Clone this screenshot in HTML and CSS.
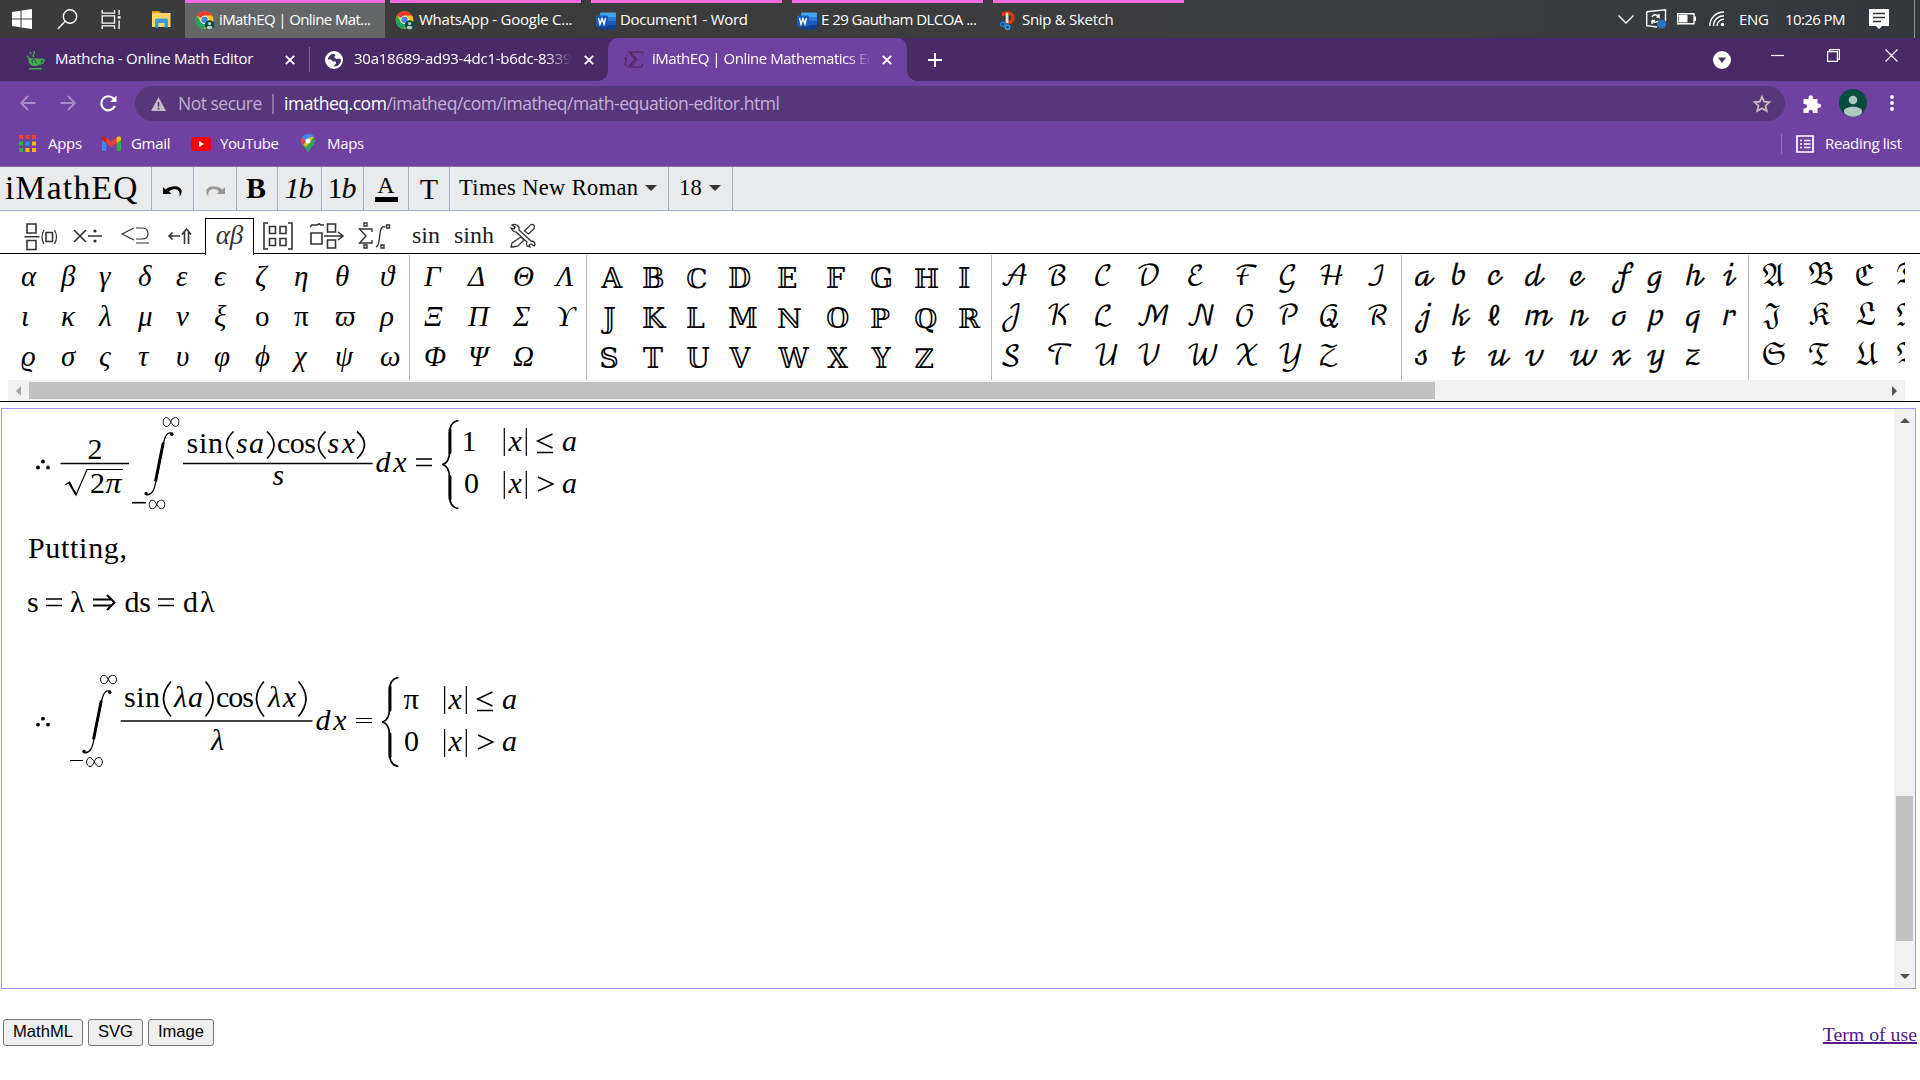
FILE: index.html
```html
<!DOCTYPE html>
<html lang="en">
<head>
<meta charset="utf-8">
<title>iMathEQ | Online Mathematics Editor</title>
<link rel="stylesheet" href="styles.css">
</head>
<body>
<svg class="defs" width="0" height="0">
  <defs>
    <symbol id="chrome" viewBox="0 0 20 20">
      <circle cx="9.5" cy="9.5" r="9.3" fill="#fbc116"/>
      <path d="M9.5 9.500L1.450 4.850A9.300 9.300 0 0 1 17.600 4.850H9.500z" fill="#e33b2e"/>
      <path d="M1.450 4.850A9.300 9.300 0 0 0 8.800 18.800L13 12 9.500 9.500 5.500 11.500z" fill="#1da462"/>
      <circle cx="9.500" cy="9.300" r="4.400" fill="#fff"/><circle cx="9.500" cy="9.300" r="3.400" fill="#4285f4"/>
      <circle cx="14.800" cy="14.800" r="5" fill="#064e40"/><circle cx="14.800" cy="13.200" r="1.700" fill="#b5cbc6"/><path d="M11.600 18c.6-3.200 5.800-3.200 6.400 0-1.800 2-4.600 2-6.400 0z" fill="#b5cbc6"/>
    </symbol>
    <symbol id="word" viewBox="0 0 20 18">
      <path d="M5 1h14a1 1 0 0 1 1 1v4H4V2a1 1 0 0 1 1-1z" fill="#41a5ee"/><path d="M4 5.500h16v4H4z" fill="#2b7cd3"/><path d="M4 9.500h16v4H4z" fill="#185abd"/><path d="M4 13.500h16V17a1 1 0 0 1-1 1H5a1 1 0 0 1-1-1z" fill="#103f91"/>
      <rect y="4" width="12" height="11" rx="1" fill="#185abd"/><path d="M2.500 6.500l1.500 6 2-5.500 2 5.500 1.500-6" fill="none" stroke="#fff" stroke-width="1.400"/>
    </symbol>
    <symbol id="x" viewBox="0 0 10 10"><path d="M.8.8l8.400 8.400M9.200.8L.8 9.200" stroke="#fff" stroke-width="1.900"/></symbol>
    <symbol id="inf" viewBox="0 0 17 10"><path d="M10 1.500C8 4 7.500 9.400 4 9.400C2 9.400.600 7.400.600 5S2 .6 4 .6C7.500.6 9 9.400 13 9.400c2 0 3.400-2 3.400-4.400S15 .6 13 .6C11.500.6 10.500 1 9.500 2.500" fill="none" stroke="#000" stroke-width="1"/></symbol>
    <symbol id="integral" viewBox="0 0 31 66"><path d="M29.500 2.500C25 .5 22 3 20 12L12.500 50C11 59 8 65 2.500 63.500" fill="none" stroke="#000" stroke-width="1.300"/><path d="M20.600 12L13 50 11.300 49.500 18.800 12z" stroke="#000" stroke-width="1.200"/><circle cx="28.300" cy="3.300" r="1.700"/><circle cx="2.600" cy="62.500" r="1.700"/></symbol>
    <symbol id="brace" viewBox="0 0 17 90"><path d="M16.500.5C9 1.500 7.500 7 7.500 14v18C7.500 39 5 43.500.5 45 5 46.500 7.500 51 7.500 58v18C7.500 83 9 88.500 16.500 89.500" fill="none" stroke="#000" stroke-width="1.700"/><path d="M8 10v23M8 57v23" stroke="#000" stroke-width="2.900" stroke-linecap="round"/></symbol>
  </defs>
</svg>

<header class="taskbar">
  <div class="launch">
    <svg class="win" viewBox="0 0 20 20"><path d="M0 3l8.500-1.200V9.500H0zM9.500 1.600L20 0v9.500H9.500zM0 10.500h8.500v7.700L0 17zM9.500 10.500H20V20L9.500 18.400z" fill="#fff"/></svg>
    <svg class="find" viewBox="0 0 21 21"><circle cx="13" cy="7.500" r="6.700"/><path d="M8.200 12.300L.8 20"/></svg>
    <svg class="views" viewBox="0 0 21 20"><path d="M.7 0v3.300h13V0M.7 20v-3.300h13V20M.7 6.200h13v7.600H.7zM18.500 0v5M18.500 11v9"/><path d="M17 6.500h3V9h-3z" fill="#fff" stroke="none"/></svg>
    <svg class="folder" viewBox="0 0 19 17"><path d="M0 0h7l2 2H0z" fill="#e8a300"/><path d="M0 2h18.500v14H0z" fill="#ffd66b"/><path d="M3 16V9q0-1.500 1.500-1.500h10Q16 7.500 16 9v7.500h-3.500V12h-6v4.500H3z" fill="#3a9be0"/></svg>
  </div>
  <nav class="tasks">
    <div class="task current"><svg><use href="#chrome"/></svg><span class="k1">iMathEQ | Online Mat...</span></div>
    <div class="task t2"><svg><use href="#chrome"/></svg><span class="k2">WhatsApp - Google C...</span></div>
    <div class="task"><svg><use href="#word"/></svg><span class="k3">Document1 - Word</span></div>
    <div class="task"><svg><use href="#word"/></svg><span class="k4">E 29 Gautham DLCOA ...</span></div>
    <div class="task"><svg viewBox="0 0 20 20"><path d="M3 2C10-2 17 1 17 7c0 4-3 7-7 6.500V10c3 0 4.500-2.500 3-4.500C11 3 7 4 4 6z" fill="#d83b11"/><path d="M7.500 3L9 1l1.500 2v10h-3z" fill="#ddd"/><circle cx="4.500" cy="14" r="2.200" fill="none" stroke="#1683d8" stroke-width="1.600"/><circle cx="9.500" cy="17" r="2.200" fill="none" stroke="#29a0e8" stroke-width="1.600"/></svg><span class="k5">Snip &amp; Sketch</span></div>
  </nav>
  <div class="tray">
    <svg class="t-chev" viewBox="0 0 16 9"><path d="M.5.5L8 8 15.500.5"/></svg>
    <svg class="t-sync" viewBox="0 0 21 20"><path d="M.7 2.700L19.500.7V12M.7 2.700v14L11 18"/><path d="M6 8c1-3 5-3 7 0V5M13.500 8h-3M12 12c-2 2-5 1.500-6-.5v3.500M6 11.500h3"/><circle cx="15.500" cy="15" r="4.600" fill="#2b74c4" class="dot"/></svg>
    <svg class="t-bat" viewBox="0 0 19 12"><path d="M.7.7h16.300v10H.7zM18.300 3.500v4.500"/><path d="M2 2h8.500v7.400H2z" fill="#fff" stroke="none"/></svg>
    <svg class="t-wifi" viewBox="0 0 16 16"><path d="M.8 15C.8 7 7 1 15 1M4.500 15C4.500 9 9 4.700 15 4.700M8 15c0-4 3-6.700 7-6.700"/><circle cx="13.500" cy="13.500" r="1.700" fill="#fff" stroke="none"/></svg>
    <span class="lang">ENG</span><span class="clock">10:26 PM</span>
    <svg class="t-note" viewBox="0 0 20 20"><path d="M0 0h20v17h-7l-3 3-3-3H0z" fill="#fff" stroke="none"/><path d="M4 4.500h12M4 8.500h12M4 12.500h8" stroke="#333"/></svg>
    <i class="peek"></i>
  </div>
</header>

<div class="tabstrip">
  <div class="tab a">
    <svg class="fav" viewBox="0 0 20 20"><path d="M2.500 8.500h13c0 5-2 7.500-6.500 7.500s-6.500-2.500-6.500-7.500z" fill="#3fae49"/><path d="M15 9.500h3c0 3-1.500 4.500-4 4.500M3 18.700h12.500M4 9L1 6M8 7c-3-2 2-3 0-6M5 4L4 2" fill="none" stroke="#3fae49" stroke-width="1.400"/><path d="M7 13c-2-1-1-4 1-3 2 0 1 4 3 3" stroke="#463068" fill="none"/></svg>
    <span class="label m">Mathcha - Online Math Editor</span><svg class="close"><use href="#x"/></svg>
  </div>
  <i class="split"></i>
  <div class="tab b">
    <svg class="fav g" viewBox="0 0 18 18"><circle cx="9" cy="9" r="9" fill="#fff"/><path d="M8.500 2.500c-3.500 1-5.500 3.500-5.800 6H6l2 2h3v2l-2.500 3c5 .5 7.500-3.500 7.500-7l-2-1-3 .5-2-2 1.500-1.500z" fill="#463068"/></svg>
    <span class="label n fade">30a18689-ad93-4dc1-b6dc-8339c</span><svg class="close"><use href="#x"/></svg>
  </div>
  <div class="tab active">
    <svg class="fav s" viewBox="0 0 20 18"><path d="M19.500 3.500V1H6l6 7.500L5.500 16h13l1-3.500M8 1.500l6 7L7 16M1 8l2.500-1L2 13.500q0 1.500 2 .5M4 3.500v1.500" fill="none" stroke="#5d2c70" stroke-width="1.500"/></svg>
    <span class="label o fade">iMathEQ | Online Mathematics Edi</span><svg class="close"><use href="#x"/></svg>
  </div>
  <svg class="plus" viewBox="0 0 14 14"><path d="M7 0v14M0 7h14" stroke="#fff" stroke-width="2"/></svg>
  <div class="winctl">
    <svg class="w1" viewBox="0 0 18 18"><circle cx="9" cy="9" r="9" fill="#fff"/><path d="M5 6.500h8L9 12z" fill="#463068"/></svg>
    <svg class="w2" viewBox="0 0 13 13"><path d="M0 6.500h13"/></svg>
    <svg class="w3" viewBox="0 0 13 13"><path d="M.6 2.600h9.800v9.800H.6zM2.600 2.600v-2h9.800v9.800h-2"/></svg>
    <svg class="w4" viewBox="0 0 13 13"><path d="M.5.5l12 12M12.500.5l-12 12"/></svg>
  </div>
</div>

<div class="navbar">
  <svg class="n-back" viewBox="0 0 16 16"><path d="M15.500 8H1.500M8 1L1 8l7 7"/></svg>
  <svg class="n-fwd" viewBox="0 0 16 16"><path d="M.5 8h14M8 1l7 7-7 7"/></svg>
  <svg class="n-load" viewBox="0 0 17 17"><path d="M14.800 11A7 7 0 1 1 13.500 3.500L15 5"/><path d="M16.500.5v6.500H10z" fill="#fff" stroke="none"/></svg>
  <div class="omnibox">
    <svg class="warn" viewBox="0 0 15 14"><path d="M7.500 0L15 14H0z" fill="#c3bcca"/><path d="M7.500 5v4.500M7.500 10.700v1.800" stroke="#55377b" stroke-width="1.600"/></svg>
    <span class="insecure">Not secure</span><i class="bar"></i>
    <span class="url"><b>imatheq.com</b>/imatheq/com/imatheq/math-equation-editor.html</span>
    <svg class="star" viewBox="0 0 18 18"><path d="M9 1.800l2.200 4.900 5.300.5-4 3.500 1.200 5.300L9 13.200 4.300 16l1.200-5.300-4-3.500 5.300-.5z" fill="none" stroke="#c9c1c3" stroke-width="1.700"/></svg>
  </div>
  <svg class="puzzle" viewBox="0 0 18 18"><path d="M1 4h4c-.6-5 5-5 4.500 0H14v4.500c5-.5 5 5 0 4.500V18H9.500c.4-4.500-5-4.500-4.500 0H0v-4.500c4.800.5 4.800-5 0-4.500V4z" fill="#fff"/></svg>
  <svg class="avatar" viewBox="0 0 28 28"><circle cx="14" cy="14" r="14" fill="#054d40"/><circle cx="14" cy="11" r="4.300" fill="#b0c8c3"/><path d="M5 21.500c2-5 16-5 18 0v2.500c-5 5-13 5-18 0z" fill="#b0c8c3"/></svg>
  <svg class="more" viewBox="0 0 4 16"><g fill="#fff"><circle cx="2" cy="2" r="1.900"/><circle cx="2" cy="8" r="1.900"/><circle cx="2" cy="14" r="1.900"/></g></svg>
</div>

<div class="bookmarks">
  <svg class="apps" viewBox="0 0 17 17"><g fill="#ea4335"><path d="M0 0h4v4H0zM6.500 0h4v4h-4zM13 0h4v4h-4z"/></g><path d="M0 6.500h4v4H0zM0 13h4v4H0z" fill="#34a853"/><path d="M6.500 6.500h4v4h-4z" fill="#2196f3"/><path d="M13 6.500h4v4h-4zM6.500 13h4v4h-4zM13 13h4v4h-4z" fill="#fbbc05"/></svg>
  <span class="b1">Apps</span>
  <svg class="gmail" viewBox="0 0 19 15"><path d="M0 3h4.300v12H1.500Q0 15 0 13.500z" fill="#4285f4"/><path d="M14.700 3H19v10.500q0 1.500-1.500 1.500h-2.800z" fill="#34a853"/><path d="M4.300 1.500l5.200 4 5.200-4V7L9.500 11 4.300 7z" fill="#ea4335"/><path d="M0 2.500C0 0 3-.5 4.300 1.500V7L0 4z" fill="#c5221f"/><path d="M19 2.500c0-2.500-3-3-4.300-1V7L19 4z" fill="#fbbc04"/></svg>
  <span class="b2">Gmail</span>
  <svg class="yt" viewBox="0 0 20 14"><rect width="20" height="14" rx="3" fill="#f00"/><path d="M8 4l5 3-5 3z" fill="#fff"/></svg>
  <span class="b3">YouTube</span>
  <svg class="pin" viewBox="0 0 14 19"><path d="M7 19C6 14 0 12 0 7a7 7 0 0 1 14 0c0 5-6 7-7 12z" fill="#34a853"/><path d="M1 4A7 7 0 0 1 13 3L4 12Q0 9 0 7z" fill="#4285f4"/><path d="M0 7q0-2 1-3.500L4.500 7 2.500 10.500Q0 9 0 7z" fill="#ea4335"/><path d="M2.500 10.500L9 3l4-.5L5 13z" fill="#fbbc04"/><path d="M9 2l4 1A7 7 0 0 0 6 0z" fill="#4285f4"/><circle cx="7" cy="7" r="2.500" fill="#fff"/></svg>
  <span class="b4">Maps</span>
  <div class="reading"><svg viewBox="0 0 18 18"><path d="M1 1h16v16H1zM4 5.500h2M8 5.500h6.500M4 9h2M8 9h6.500M4 12.500h2M8 12.500h6.500" fill="none" stroke="#fff" stroke-width="1.700"/></svg><span>Reading list</span></div>
</div>

<div class="tools">
  <div class="brand">iMathEQ</div>
  <div class="c1"><svg width="20" height="12" viewBox="0 0 20 12"><path d="M0 2l2.500 2.500C8 0 17 0 18.500 5c.5 2.500-.5 5-2 6.500 1-4.500-1.500-7.500-5-7.500-2 0-4 1-5.500 2.500L8.500 9H0z"/></svg></div>
  <div class="c2"><svg width="20" height="12" viewBox="0 0 20 12"><path d="M20 2l-2.500 2.500C12 0 3 0 1.500 5c-.5 2.500.5 5 2 6.500C2.500 7 5 4 8.500 4c2 0 4 1 5.500 2.500L11.500 9H20z" fill="#999"/></svg></div>
  <div class="c3 bold">B</div>
  <div class="c4"><em>1b</em></div>
  <div class="c5">1<em>b</em></div>
  <div class="c6"><span class="inkA">A</span></div>
  <div class="c7">T</div>
  <div class="c8 pick">Times New Roman<i class="tri"></i></div>
  <div class="c9 pick">18<i class="tri"></i></div>
</div>

<div class="cats">
  <svg class="i1" width="34" height="30" viewBox="0 0 34 30"><path d="M3 3h9v9H3zM3 19.500h9v9H3zM.5 15.700h15M22 11.500h6.500v9H22z"/><path d="M20 9q-4 7 0 14M30.500 9q4 7 0 14" stroke-width="1.200"/></svg>
  <svg class="i2" width="30" height="14" viewBox="0 0 30 14"><path d="M1 1l12 12M13 1L1 13M15 7h14"/><circle cx="22" cy="2" r="1.600" fill="#333" stroke="none"/><circle cx="22" cy="12" r="1.600" fill="#333" stroke="none"/></svg>
  <svg class="i3" width="29" height="18" viewBox="0 0 29 18"><path d="M13 1L1 7l12 6M15 1h6q6 0 6 5.500T21 12h-6M15 16h13" stroke-width="1.200"/></svg>
  <svg class="i4" width="24" height="16" viewBox="0 0 24 16"><path d="M12 8H1M4.500 4.500L1 8l3.500 3.500M16.500 16V4M20.500 16V4M14 6.500L18.500 1 23 6.500"/></svg>
  <div class="chosen">αβ</div>
  <svg class="i5" width="30" height="28" viewBox="0 0 30 28"><path d="M5 1H1v26h4M25 1h4v26h-4M6.500 4.500h6v7h-6zM17 4.500h6v7h-6zM6.500 16.500h6v7h-6zM17 16.500h6v7h-6z"/></svg>
  <svg class="i6" width="35" height="28" viewBox="0 0 35 28"><path d="M2 11h11v11H2zM1 5l2-2h5l2-1 2 1h3M18.500 2h8v8h-8zM18.500 18h8v8h-8zM15 14h18M29 10l5 4-5 4"/></svg>
  <svg class="i7" width="34" height="28" viewBox="0 0 34 28"><path d="M14 10V7H1.500l6.500 7-6.500 7H14v-3M6 1h3v3H6zM6 23h3v3H6zM28.500 3h3v3h-3zM23 23h3v3h-3zM27 5q-4-2-5 7l-1 7q-.5 5-3 6" stroke-width="1.400"/></svg>
  <span class="fn f1">sin</span><span class="fn f2">sinh</span>
  <svg class="i8" width="26" height="25" viewBox="0 0 26 25"><path d="M2 2q4-2 7 2v3l12 11q4 0 4 4l-1 1-3-2-2 1 1 2-3-1q-1-3 0-4L6 9Q3 9 1 5l3 1 1-2zM23 1.500l1.500 1.500q0 3-2 4l-4 4-4-3 4-4q2-3 4.500-2.500zM11 14l3 3-6 6-5 1-2 0 1-4z" stroke-width="1.300"/></svg>
</div>

<div class="palette">
  <div class="groups">
    <div class="grp g1 it"><span>α</span><span>β</span><span>γ</span><span>δ</span><span>ε</span><span>ϵ</span><span>ζ</span><span>η</span><span>θ</span><span>ϑ</span><span>ι</span><span>κ</span><span>λ</span><span>μ</span><span>ν</span><span>ξ</span><b>ο</b><b>π</b><span>ϖ</span><span>ρ</span><span>ϱ</span><span>σ</span><span>ς</span><span>τ</span><span>υ</span><span>φ</span><span>ϕ</span><span>χ</span><span>ψ</span><span>ω</span></div>
    <div class="grp g2 it"><span>Γ</span><span>Δ</span><span>Θ</span><span>Λ</span><span>Ξ</span><span>Π</span><span>Σ</span><span>ϒ</span><span>Φ</span><span>Ψ</span><span>Ω</span></div>
    <div class="grp g3"><span>𝔸</span><span>𝔹</span><span>ℂ</span><span>𝔻</span><span>𝔼</span><span>𝔽</span><span>𝔾</span><span>ℍ</span><span>𝕀</span><span>𝕁</span><span>𝕂</span><span>𝕃</span><span>𝕄</span><span>ℕ</span><span>𝕆</span><span>ℙ</span><span>ℚ</span><span>ℝ</span><span>𝕊</span><span>𝕋</span><span>𝕌</span><span>𝕍</span><span>𝕎</span><span>𝕏</span><span>𝕐</span><span>ℤ</span></div>
    <div class="grp g4"><span>𝒜</span><span>ℬ</span><span>𝒞</span><span>𝒟</span><span>ℰ</span><span>ℱ</span><span>𝒢</span><span>ℋ</span><span>ℐ</span><span>𝒥</span><span>𝒦</span><span>ℒ</span><span>ℳ</span><span>𝒩</span><span>𝒪</span><span>𝒫</span><span>𝒬</span><span>ℛ</span><span>𝒮</span><span>𝒯</span><span>𝒰</span><span>𝒱</span><span>𝒲</span><span>𝒳</span><span>𝒴</span><span>𝒵</span></div>
    <div class="grp g5"><span>𝒶</span><span>𝒷</span><span>𝒸</span><span>𝒹</span><span>ℯ</span><span>𝒻</span><span>ℊ</span><span>𝒽</span><span>𝒾</span><span>𝒿</span><span>𝓀</span><span>ℓ</span><span>𝓂</span><span>𝓃</span><span>ℴ</span><span>𝓅</span><span>𝓆</span><span>𝓇</span><span>𝓈</span><span>𝓉</span><span>𝓊</span><span>𝓋</span><span>𝓌</span><span>𝓍</span><span>𝓎</span><span>𝓏</span></div>
    <div class="grp g6"><span>𝔄</span><span>𝔅</span><span>ℭ</span><span>𝔇</span><span>𝔍</span><span>𝔎</span><span>𝔏</span><span>𝔐</span><span>𝔖</span><span>𝔗</span><span>𝔘</span><span>𝔙</span></div>
  </div>
  <div class="hscroll"><i class="la"></i><i class="hthumb"></i><i class="ra"></i></div>
</div>

<main class="editor">
  <svg class="sheet" width="1890" height="579" viewBox="2 409 1890 579">
    <g id="eq1">
      <circle cx="43" cy="461.500" r="1.900"/><circle cx="38" cy="467.500" r="1.900"/><circle cx="48" cy="467.500" r="1.900"/>
      <path class="ln" d="M60.500 463.500H129M183 463.500H372.500"/>
      <text x="87.500" y="458.500">2</text>
      <path d="M65.500 485l4-3 6.500 13 11-25.500h36" fill="none" stroke="#000" stroke-width="1.200"/><path d="M69 482.500l7 12" stroke="#000" stroke-width="2"/>
      <text x="90" y="493">2</text><text x="105.500" y="493" class="v" textLength="16" lengthAdjust="spacingAndGlyphs">π</text>
      <use href="#integral" x="143.500" y="431" width="31" height="66"/><use href="#inf" x="162.500" y="417" width="17" height="10"/>
      <path class="ln" d="M132 502.700h14"/><use href="#inf" x="148.500" y="499.500" width="17" height="10"/>
      <text x="186.500" y="453" textLength="36.500">sin</text><text x="236" y="453" class="v" textLength="28">sa</text>
      <text x="277" y="453" textLength="39">cos</text><text x="327.500" y="453" class="v" textLength="27.500">sx</text>
      <path class="par" d="M233.500 431.500q-14 13 0 27M267 431.500q14 13 0 27M325.500 431.500q-14 13 0 27M357 431.500q15 13 0 27"/>
      <text x="272.500" y="484.500" class="v">s</text><text x="375.500" y="472" class="v" textLength="31">dx</text>
      <path class="ln" d="M416 459h16M416 465.500h16"/>
      <use href="#brace" x="442" y="420" width="17" height="89"/>
      <text x="461.500" y="451">1</text><text x="464" y="493">0</text>
      <path class="ln thin" d="M504.300 428v28M526.300 428v28M504.300 471v28M526.300 471v28"/>
      <text x="508.500" y="451" class="v">x</text><text x="508.500" y="493" class="v">x</text>
      <path class="op" d="M552.500 434l-15 7 15 7M537 452.500h16M538 477l15 7-15 7"/>
      <text x="562" y="451" class="v">a</text><text x="562" y="493" class="v">a</text>
    </g>
    <text x="28" y="558" textLength="99">Putting,</text>
    <g id="sub">
      <text x="27" y="612">s</text><text x="70" y="612">λ</text><text x="124.500" y="612" textLength="26.500">ds</text><text x="183" y="612" textLength="31.500">dλ</text>
      <path class="ln" d="M46 599h16M46 605.500h16M158 599h16M158 605.500h16"/>
      <path d="M93 599.500h18M93 605.500h18M107 595l7.500 7.500-7.500 7.500" fill="none" stroke="#000" stroke-width="2"/>
    </g>
    <g id="eq2">
      <circle cx="43" cy="718.700" r="1.900"/><circle cx="38" cy="724.700" r="1.900"/><circle cx="48" cy="724.700" r="1.900"/>
      <use href="#integral" x="81.500" y="689" width="31" height="66"/><use href="#inf" x="100" y="674.500" width="17" height="10"/>
      <path class="ln thin" d="M70 760.500h13M356 718.500h16M356 722.500h16"/><use href="#inf" x="86" y="757" width="17" height="10"/>
      <path d="M120.700 721H312.500" stroke="#444" stroke-width="2"/>
      <text x="124" y="707" textLength="36">sin</text><text x="174" y="707" class="v" textLength="29">λa</text>
      <text x="216" y="707" textLength="38">cos</text><text x="268" y="707" class="v" textLength="28">λx</text>
      <path class="par" d="M171 681.500q-15 17 0 35M205.500 681.500q15 17 0 35M264 681.500q-15 17 0 35M298.500 681.500q15 17 0 35"/>
      <text x="211" y="749.500" class="v">λ</text><text x="315.500" y="729.500" class="v" textLength="31">dx</text>
      <use href="#brace" x="382" y="677" width="17" height="90"/>
      <text x="403.500" y="709" textLength="15.500" lengthAdjust="spacingAndGlyphs">π</text><text x="404" y="751">0</text>
      <path class="ln thin" d="M444.600 686v28M466.300 686v28M444.600 729v28M466.300 729v28"/>
      <text x="448.500" y="709" class="v">x</text><text x="448.500" y="751" class="v">x</text>
      <path class="op" d="M492.500 692l-15 7 15 7M477 710.500h16M478 735l15 7-15 7"/>
      <text x="502" y="709" class="v">a</text><text x="502" y="751" class="v">a</text>
    </g>
  </svg>
  <div class="vscroll"><i class="ua"></i><i class="vthumb"></i><i class="da"></i></div>
</main>

<footer class="foot">
  <button class="m1">MathML</button><button class="m2">SVG</button><button class="m3">Image</button>
  <a href="#">Term of use</a>
</footer>
</body>
</html>
```
FILE: styles.css
```css
* { box-sizing: border-box; }
body { margin: 0; width: 1920px; height: 1080px; overflow: hidden; background: #fff; color: #000; font-family: "Open Sans", "Noto Sans", sans-serif; }
.defs { position: absolute; }
svg { display: block; flex: none; overflow: visible; }
span { white-space: nowrap; flex: none; }

/* Windows taskbar */
.taskbar { display: flex; height: 38px; background: linear-gradient(90deg, #3b3b3b, #3c3d3f 75%, #33373e); color: #fff; font-size: 15px; }
.launch { width: 185px; display: flex; align-items: center; }
.launch svg, .tray svg { fill: none; stroke: #fff; stroke-width: 1.4; }
.launch path[fill], .tray .dot { stroke: none; }
.win { width: 20px; height: 20px; margin-left: 12px; }
.find { width: 21px; height: 21px; margin-left: 25px; }
.views { width: 21px; height: 19px; margin-left: 23px; }
.folder { width: 19px; height: 17px; margin-left: 30px; }
.tasks { display: flex; gap: 10px; }
.task { width: 191px; height: 38px; border-top: 3px solid #f06be0; display: flex; align-items: center; padding: 0 0 3px 5px; }
.task.current { width: 200px; background: #656668; padding-left: 10px; margin-right: -5px; }
.task.t2 { width: 191px; }
.task svg { width: 20px; height: 19px; margin-top: 2px; }
.task span { margin-left: 4px; }
.k1 { letter-spacing: -.6px; }
.k2 { letter-spacing: -.25px; }
.k4 { letter-spacing: -.55px; }
.k3 { letter-spacing: -.3px; }
.k5 { letter-spacing: -.3px; }
.tray { margin-left: auto; width: 302px; display: flex; align-items: center; }
.t-chev { width: 16px; height: 9px; }
.t-sync { width: 21px; height: 20px; margin-left: 12px; }
.t-bat { width: 19px; height: 12px; margin-left: 10px; }
.t-wifi { width: 16px; height: 16px; margin-left: 13px; }
.lang { margin-left: 14px; width: 46px; letter-spacing: -.3px; }
.clock { width: 84px; letter-spacing: -.6px; }
.t-note { width: 20px; height: 20px; }
.peek { height: 38px; margin-left: 25px; border-left: 1px solid #8c8f93; }

/* Browser tab strip */
.tabstrip { display: flex; height: 43px; background: #472a66; align-items: center; font-size: 15px; color: #fff; }
.tab { display: flex; align-items: center; height: 43px; }
.tab.a { width: 309px; padding-left: 26px; }
.tab.b { width: 298px; padding-left: 15px; }
.tab.active { width: 299px; background: #6f41a1; border-radius: 10px 10px 0 0; padding-left: 15px; position: relative; }
.tab.active::before, .tab.active::after { content: ""; position: absolute; bottom: 0; width: 10px; height: 10px; }
.tab.active::before { left: -10px; background: radial-gradient(circle at 0 0, transparent 9.5px, #6f41a1 10px); }
.tab.active::after { right: -10px; background: radial-gradient(circle at 100% 0, transparent 9.5px, #6f41a1 10px); }
.fav { width: 20px; height: 20px; }
.fav.g { width: 18px; height: 18px; }
.fav.s { height: 18px; }
.split { width: 1px; height: 25px; background: #80699b; }
.label { overflow: hidden; padding-bottom: 3px; }
.label.m { width: 221px; margin-left: 9px; letter-spacing: -.27px; }
.label.n { width: 218px; margin-left: 11px; letter-spacing: -.25px; }
.label.o { width: 220px; margin-left: 9px; letter-spacing: -.47px; }
.fade { mask-image: linear-gradient(90deg, #000 88%, transparent 100%); }
.close { width: 10px; height: 10px; margin-left: 9px; }
.label.n + .close { margin-left: 12px; }
.label.o + .close { margin-left: 10px; }
.plus { width: 14px; height: 14px; margin-left: 21px; }
.winctl { margin-left: auto; display: flex; width: 207px; padding-bottom: 2px; }
.winctl svg { fill: none; stroke: #fff; stroke-width: 1.2; width: 13px; height: 13px; }
.winctl .w1 { width: 18px; height: 18px; stroke: none; margin-top: 2px; }
.w2 { margin-left: 40px; }
.w3 { margin-left: 43px; }
.w4 { margin-left: 45px; }

/* Address bar */
.navbar { display: flex; height: 45px; background: #6f41a1; align-items: center; }
.n-back, .n-fwd { width: 16px; height: 16px; fill: none; stroke: #a98bc9; stroke-width: 1.8; }
.n-back { margin-left: 20px; }
.n-fwd { margin-left: 24px; }
.n-load { width: 17px; height: 17px; margin-left: 24px; fill: none; stroke: #fff; stroke-width: 2.2; }
.n-back, .n-fwd, .n-load { margin-bottom: 1px; }
.omnibox { width: 1650px; height: 35px; margin-left: 18px; border-radius: 18px; background: #56387a; display: flex; align-items: center; font-size: 17.5px; color: #c3b2d7; }
.warn { width: 15px; height: 14px; margin-left: 16px; }
.insecure { width: 94px; margin-left: 12px; color: #bdb0cc; letter-spacing: -.5px; padding-bottom: 2px; }
.bar { width: 2px; height: 20px; background: #8a74a3; margin-right: 10px; }
.url { letter-spacing: -.47px; padding-bottom: 2px; }
.url b { font-weight: 400; color: #fff; }
.star { width: 18px; height: 18px; margin-left: auto; margin-right: 14px; }
.puzzle { width: 19px; height: 18px; margin-left: 18px; }
.avatar { width: 28px; height: 28px; margin-left: 17px; margin-bottom: 1px; }
.more { width: 4px; height: 16px; margin-left: 23px; margin-bottom: 1px; }

/* Bookmarks */
.bookmarks { display: flex; height: 41px; background: #6f41a1; align-items: center; color: #fff; font-size: 15px; letter-spacing: -.3px; padding-bottom: 5px; border-bottom: 1px solid #8b66b4; }
.bookmarks span { padding-bottom: 2px; }
.apps { width: 17px; height: 17px; margin-left: 19px; }
.gmail { width: 19px; height: 15px; }
.yt { width: 20px; height: 14px; }
.pin { width: 14px; height: 19px; }
.b1 { margin-left: 12px; width: 54px; }
.b2 { margin-left: 10px; width: 60px; }
.b3 { margin-left: 9px; width: 81px; letter-spacing: -.45px; }
.b4 { margin-left: 12px; }
.reading { margin-left: auto; display: flex; align-items: center; width: 139px; border-left: 1px solid #9573ba; height: 20px; padding-left: 14px; gap: 11px; }
.reading svg { width: 18px; height: 18px; }

/* Editor toolbar */
.tools { display: flex; height: 44px; background: #e8eaeb; border-bottom: 1px solid #9cb1c5; font: 30px "Liberation Serif", serif; }
.tools > div { border-right: 1px solid #9cb1c5; display: flex; align-items: center; justify-content: center; }
.tools .brand { width: 152px; font-size: 33.5px; letter-spacing: 1.3px; padding: 0 0 2px 5px; justify-content: flex-start; }
.c1 { width: 42px; } .c2 { width: 43px; } .c3 { width: 41px; } .c4 { width: 44px; } .c5 { width: 42px; } .c6 { width: 45px; } .c7 { width: 41px; }
.c4, .c5 { letter-spacing: -1px; }
.tools > .c3, .tools > .c4, .tools > .c5 { padding: 0 2px 2px 0; }
.c2 svg, .c1 svg { margin-top: 4px; }
.bold { font-weight: 700; }
.inkA { width: 23px; height: 25px; border-bottom: 5px solid #000; font-size: 24px; line-height: 17px; text-align: center; margin-top: 2px; }
.tools .pick { justify-content: flex-start; font-size: 22.5px; padding-left: 9px; letter-spacing: .35px; gap: 7px; padding-bottom: 2px; }
.tools .c8 { width: 219px; }
.tools .c9 { width: 64px; padding-left: 10px; }
.tri { border: 6px solid transparent; border-top-color: #333; border-bottom: 0; }

/* Category tabs */
.cats { display: flex; height: 43px; border-bottom: 1px solid #000; align-items: center; font-family: "Liberation Serif", serif; padding-left: 24px; padding-top: 7px; }
.cats > svg { fill: none; stroke: #333; stroke-width: 1.6; }
.i2 { margin-left: 15px; }
.i3 { margin-left: 18px; }
.i4 { margin-left: 18px; }
.chosen { width: 49px; height: 37px; margin-left: 13px; border: 1px solid #000; border-bottom: 0; background: #fff; font: italic 27px/32px "Liberation Serif", serif; text-align: center; color: #333; margin-bottom: -1px; }
.i5 { margin-left: 9px; }
.i6 { margin-left: 16px; }
.i7 { margin-left: 14px; }
.fn { font-size: 24px; color: #222; }
.f1 { margin-left: 20px; width: 42px; }
.f2 { width: 56px; }

/* Symbol palette */
.palette { height: 148px; border-bottom: 1px solid #000; padding: 1px 15px 0 8px; }
.groups { display: flex; height: 125px; overflow: hidden; }
.grp { display: grid; flex: none; grid-auto-rows: 40px; border-right: 1px solid #b8b8b8; font: 27px/40px "DejaVu Math TeX Gyre", "Liberation Serif", serif; padding-top: 3px; }
.grp > * { height: 40px; }
.grp.it { font-family: "Liberation Serif", serif; font-size: 29px; font-style: italic; padding-top: 1px; }
.it b { font-style: normal; font-weight: 400; }
.g1 { width: 402px; padding-left: 13px; grid-template-columns: 40px 38px 39px 38px 38px 41px 39px 41px 45px 30px; }
.g2 { width: 177px; padding-left: 14px; grid-template-columns: 44px 45px 43px 30px; }
.grp.g3 { width: 405px; padding-left: 12px; padding-top: 6px; grid-template-columns: 42px 44px 42px 49px 49px 44px 44px 44px 30px; }
.g4 { width: 410px; padding-left: 8px; grid-template-columns: 46px 47px 43px 50px 48px 43px 41px 48px 30px; }
.g5 { width: 347px; padding-left: 11px; grid-template-columns: 37px 36px 37px 45px 42px 35px 39px 37px 24px; -webkit-text-stroke: .4px #000; }
.g6 { width: 220px; padding-left: 12px; grid-template-columns: 46px 47px 41px 40px; border: 0; }
.hscroll { display: flex; align-items: center; height: 21px; background: #f1f1f1; }
.la, .ra { border: 5px solid transparent; }
.la { margin-left: 3px; border-right: 5px solid #a3a3a3; }
.ra { margin-left: auto; margin-right: 3px; border-left: 5px solid #505050; }
.hthumb { width: 1406px; height: 17px; margin-left: 8px; background: #c1c1c1; }

/* Equation sheet */
.editor { display: flex; justify-content: space-between; margin: 6px 0 0 1px; width: 1915px; height: 581px; border: 1px solid #9b96fa; }
.sheet { font: 30px "Liberation Serif", serif; }
.sheet .v { font-style: italic; }
.ln { stroke: #000; stroke-width: 1.6; fill: none; }
.ln.thin { stroke-width: 1.2; }
.par { stroke: #000; stroke-width: 1.7; fill: none; }
.op { stroke: #000; stroke-width: 1.4; fill: none; }
.vscroll { width: 21px; background: #f1f1f1; display: flex; flex-direction: column; align-items: center; }
.ua, .da { border: 5px solid transparent; }
.ua { margin-top: 4px; border-bottom: 5px solid #505050; }
.da { margin-top: auto; margin-bottom: 4px; border-top: 5px solid #505050; }
.vthumb { width: 17px; height: 145px; margin-top: 373px; background: #c1c1c1; }

/* Footer */
.foot { display: flex; align-items: flex-start; padding: 30px 3px 0; gap: 5px; }
.foot button { height: 27px; padding: 0 0 2px; border: 1px solid #767676; border-radius: 3px; background: #efefef; font: 16.6px "Liberation Sans", sans-serif; color: #000; line-height: 22px; }
.m1 { width: 80px; } .m2 { width: 55px; } .m3 { width: 66px; }
.foot a { margin-left: auto; margin-top: 3px; font: 19.8px/24px "Liberation Serif", serif; color: #551a8b; text-decoration-thickness: 2px; }
```
